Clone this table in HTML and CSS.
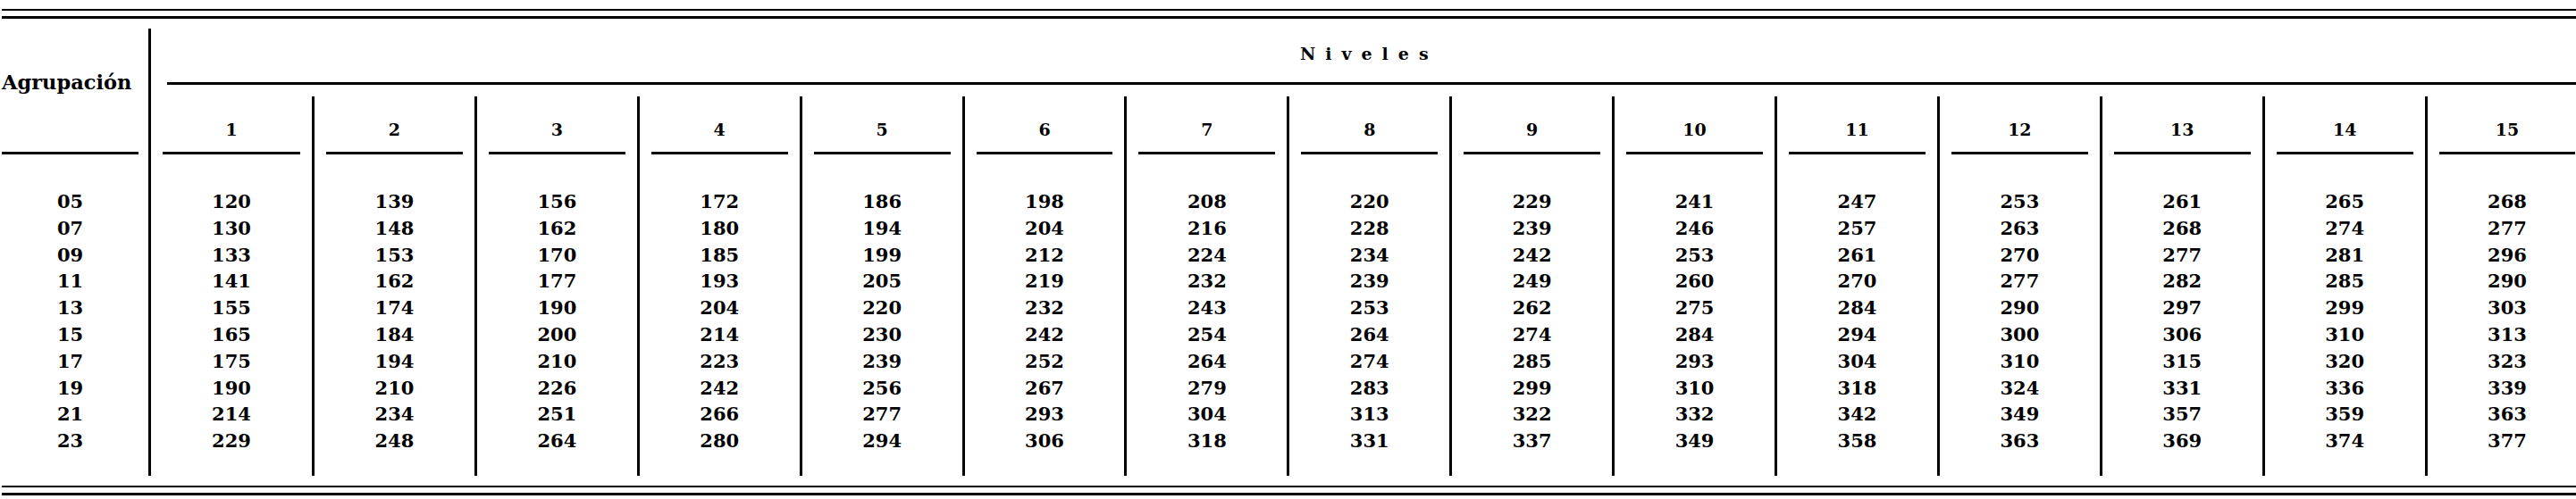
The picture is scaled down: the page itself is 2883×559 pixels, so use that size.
FILE: index.html
```html
<!DOCTYPE html>
<html lang="es">
<head>
<meta charset="utf-8">
<title>Niveles por agrupación</title>
<link rel="stylesheet" href="styles.css">
</head>
<body>
<div class="sheet">
  <div class="double-rule top"><span class="line"></span><span class="line thick"></span></div>
  <div class="table">
    <div class="agr">
      <div class="agr-head">Agrupación</div>
      <div class="rule"></div>
      <div class="cells"><span>05</span><span>07</span><span>09</span><span>11</span><span>13</span><span>15</span><span>17</span><span>19</span><span>21</span><span>23</span></div>
    </div>
    <div class="niveles">
      <div class="niv-title">Niveles</div>
      <div class="niv-rule"></div>
      <div class="levels">
        <div class="level first"><div class="level-head">1</div><div class="rule"></div><div class="cells"><span>120</span><span>130</span><span>133</span><span>141</span><span>155</span><span>165</span><span>175</span><span>190</span><span>214</span><span>229</span></div></div>
        <div class="level"><div class="level-head">2</div><div class="rule"></div><div class="cells"><span>139</span><span>148</span><span>153</span><span>162</span><span>174</span><span>184</span><span>194</span><span>210</span><span>234</span><span>248</span></div></div>
        <div class="level"><div class="level-head">3</div><div class="rule"></div><div class="cells"><span>156</span><span>162</span><span>170</span><span>177</span><span>190</span><span>200</span><span>210</span><span>226</span><span>251</span><span>264</span></div></div>
        <div class="level"><div class="level-head">4</div><div class="rule"></div><div class="cells"><span>172</span><span>180</span><span>185</span><span>193</span><span>204</span><span>214</span><span>223</span><span>242</span><span>266</span><span>280</span></div></div>
        <div class="level"><div class="level-head">5</div><div class="rule"></div><div class="cells"><span>186</span><span>194</span><span>199</span><span>205</span><span>220</span><span>230</span><span>239</span><span>256</span><span>277</span><span>294</span></div></div>
        <div class="level"><div class="level-head">6</div><div class="rule"></div><div class="cells"><span>198</span><span>204</span><span>212</span><span>219</span><span>232</span><span>242</span><span>252</span><span>267</span><span>293</span><span>306</span></div></div>
        <div class="level"><div class="level-head">7</div><div class="rule"></div><div class="cells"><span>208</span><span>216</span><span>224</span><span>232</span><span>243</span><span>254</span><span>264</span><span>279</span><span>304</span><span>318</span></div></div>
        <div class="level"><div class="level-head">8</div><div class="rule"></div><div class="cells"><span>220</span><span>228</span><span>234</span><span>239</span><span>253</span><span>264</span><span>274</span><span>283</span><span>313</span><span>331</span></div></div>
        <div class="level"><div class="level-head">9</div><div class="rule"></div><div class="cells"><span>229</span><span>239</span><span>242</span><span>249</span><span>262</span><span>274</span><span>285</span><span>299</span><span>322</span><span>337</span></div></div>
        <div class="level"><div class="level-head">10</div><div class="rule"></div><div class="cells"><span>241</span><span>246</span><span>253</span><span>260</span><span>275</span><span>284</span><span>293</span><span>310</span><span>332</span><span>349</span></div></div>
        <div class="level"><div class="level-head">11</div><div class="rule"></div><div class="cells"><span>247</span><span>257</span><span>261</span><span>270</span><span>284</span><span>294</span><span>304</span><span>318</span><span>342</span><span>358</span></div></div>
        <div class="level"><div class="level-head">12</div><div class="rule"></div><div class="cells"><span>253</span><span>263</span><span>270</span><span>277</span><span>290</span><span>300</span><span>310</span><span>324</span><span>349</span><span>363</span></div></div>
        <div class="level"><div class="level-head">13</div><div class="rule"></div><div class="cells"><span>261</span><span>268</span><span>277</span><span>282</span><span>297</span><span>306</span><span>315</span><span>331</span><span>357</span><span>369</span></div></div>
        <div class="level"><div class="level-head">14</div><div class="rule"></div><div class="cells"><span>265</span><span>274</span><span>281</span><span>285</span><span>299</span><span>310</span><span>320</span><span>336</span><span>359</span><span>374</span></div></div>
        <div class="level"><div class="level-head">15</div><div class="rule"></div><div class="cells"><span>268</span><span>277</span><span>296</span><span>290</span><span>303</span><span>313</span><span>323</span><span>339</span><span>363</span><span>377</span></div></div>
      </div>
    </div>
  </div>
  <div class="double-rule bottom"><span class="line"></span><span class="line thick"></span></div>
</div>
</body>
</html>
```

FILE: styles.css
```css
html, body {
  margin: 0;
  padding: 0;
  background: #fff;
  overflow: hidden;
}

.sheet {
  width: 2883px;
  height: 559px;
  overflow: hidden;
  color: #000;
  font-family: "DejaVu Serif", "Liberation Serif", serif;
  font-weight: bold;
}

.double-rule {
  display: flex;
  flex-direction: column;
  gap: 6px;
  padding-left: 2px;
}

.double-rule.top {
  padding-top: 10px;
}

.double-rule.bottom {
  margin-top: 11px;
}

.line {
  display: block;
  height: 2px;
  background: #000;
}

.line.thick {
  height: 3px;
}

.table {
  display: flex;
  margin-top: 11px;
  height: 501px;
}

.agr {
  flex: none;
  width: 169px;
  box-sizing: border-box;
  border-right: 3px solid #000;
  padding: 0 11px 0 2px;
  display: flex;
  flex-direction: column;
}

.agr-head {
  height: 138px;
  box-sizing: border-box;
  padding-top: 47px;
  font-size: 22.5px;
  line-height: 26px;
}

.rule {
  height: 3px;
  background: #000;
}

.cells {
  display: flex;
  flex-direction: column;
  align-items: center;
  margin-top: 38px;
  font-size: 21px;
  line-height: 29.8px;
}

.niveles {
  flex: none;
  display: flex;
  flex-direction: column;
}

.niv-title {
  padding-top: 17px;
  height: 22px;
  line-height: 22px;
  font-size: 19px;
  letter-spacing: 11px;
  text-align: center;
}

.niv-rule {
  height: 3px;
  margin-top: 21px;
  margin-left: 18px;
  background: #000;
}

.levels {
  flex: 1;
  display: flex;
  margin-top: 13px;
}

.level {
  flex: none;
  width: 181.9px;
  box-sizing: border-box;
  border-left: 3px solid #000;
  display: flex;
  flex-direction: column;
}

.level.first {
  width: 180px;
  border-left: none;
}

.level-head {
  height: 62px;
  box-sizing: border-box;
  padding-top: 26px;
  font-size: 19px;
  line-height: 22px;
  text-align: center;
}

.level .rule {
  margin: 0 13px;
}
```
